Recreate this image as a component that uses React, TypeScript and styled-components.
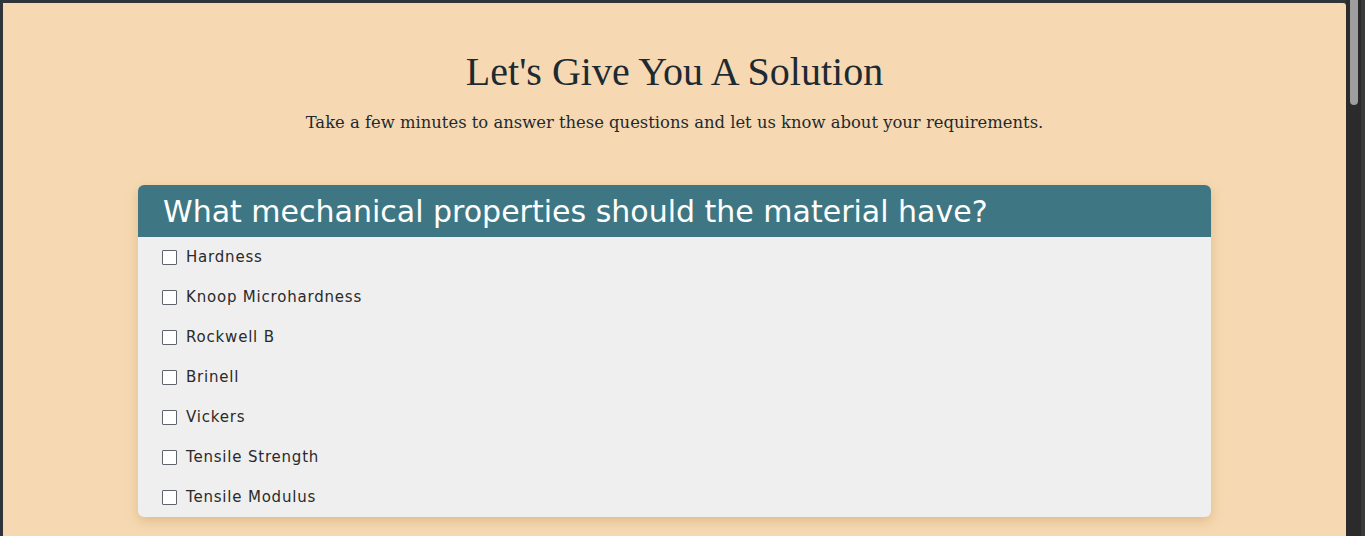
import React from "react";
import styled, { createGlobalStyle } from "styled-components";

const GlobalStyle = createGlobalStyle`
  html, body {
    margin: 0;
    padding: 0;
    height: 100%;
    overflow: hidden;
    background: #2b2b2b;
  }
  #root {
    height: 100%;
  }
`;

const Frame = styled.div`
  display: flex;
  height: 536px;
  background: #30353a;
  padding: 3px 0 0 3px;
  box-sizing: border-box;
`;

const Page = styled.main`
  flex: 1;
  background: #f6d9b2;
  border-top-right-radius: 3px;
  display: flex;
  flex-direction: column;
  align-items: center;
  padding-top: 46px;
  overflow: hidden;
`;

const Scrollbar = styled.div`
  width: 19px;
  background: #2b2b2b;
  border-right: 4px solid #3a3a3a;
  box-sizing: border-box;
  display: flex;
  justify-content: center;
  margin-top: -3px;

  .thumb {
    width: 8px;
    height: 105px;
    background: #9e9e9e;
    border-radius: 0 0 4px 4px;
  }
`;

const Title = styled.h1`
  margin: 0;
  font-family: "Liberation Serif", "DejaVu Serif", serif;
  font-weight: 400;
  font-size: 40px;
  line-height: 46px;
  color: #1e2a31;
`;

const Subtitle = styled.p`
  margin: 17px 0 0;
  font-family: "DejaVu Serif", "Liberation Serif", serif;
  font-size: 16.4px;
  line-height: 22px;
  color: #1e2a31;
`;

const Card = styled.section`
  margin-top: 51px;
  width: 1073px;
  background: #efefef;
  border-radius: 6px;
  overflow: hidden;
  box-shadow: 0 4px 12px rgba(180, 130, 70, 0.35);
`;

const Question = styled.h2`
  margin: 0;
  height: 52px;
  display: flex;
  align-items: center;
  padding-left: 25px;
  background: #3e7783;
  color: #ffffff;
  font-family: "DejaVu Sans", "Open Sans", sans-serif;
  font-weight: 400;
  font-size: 30px;
`;

const Options = styled.ul`
  list-style: none;
  margin: 0;
  padding: 0;
`;

const Option = styled.li`
  height: 40px;
  display: flex;
  align-items: center;
  padding-left: 24px;
  gap: 9px;
  font-family: "DejaVu Sans", "Open Sans", sans-serif;
  font-size: 15px;
  letter-spacing: 0.8px;
  color: #2a2a2a;

  input {
    appearance: none;
    margin: 0;
    width: 15px;
    height: 15px;
    border: 1px solid #5f646b;
    border-radius: 1px;
    background: #ffffff;
    box-sizing: border-box;
  }
`;

const properties = [
  "Hardness",
  "Knoop Microhardness",
  "Rockwell B",
  "Brinell",
  "Vickers",
  "Tensile Strength",
  "Tensile Modulus",
];

const App = () => {
  return (
    <>
      <GlobalStyle />
      <Frame>
        <Page>
          <Title>Let's Give You A Solution</Title>
          <Subtitle>
            Take a few minutes to answer these questions and let us know about
            your requirements.
          </Subtitle>

          <Card>
            <Question>What mechanical properties should the material have?</Question>
            <Options>
              {properties.map((name) => (
                <Option key={name}>
                  <input type="checkbox" />
                  <label>{name}</label>
                </Option>
              ))}
            </Options>
          </Card>
        </Page>
        <Scrollbar>
          <div className="thumb" />
        </Scrollbar>
      </Frame>
    </>
  );
};

export default App;
